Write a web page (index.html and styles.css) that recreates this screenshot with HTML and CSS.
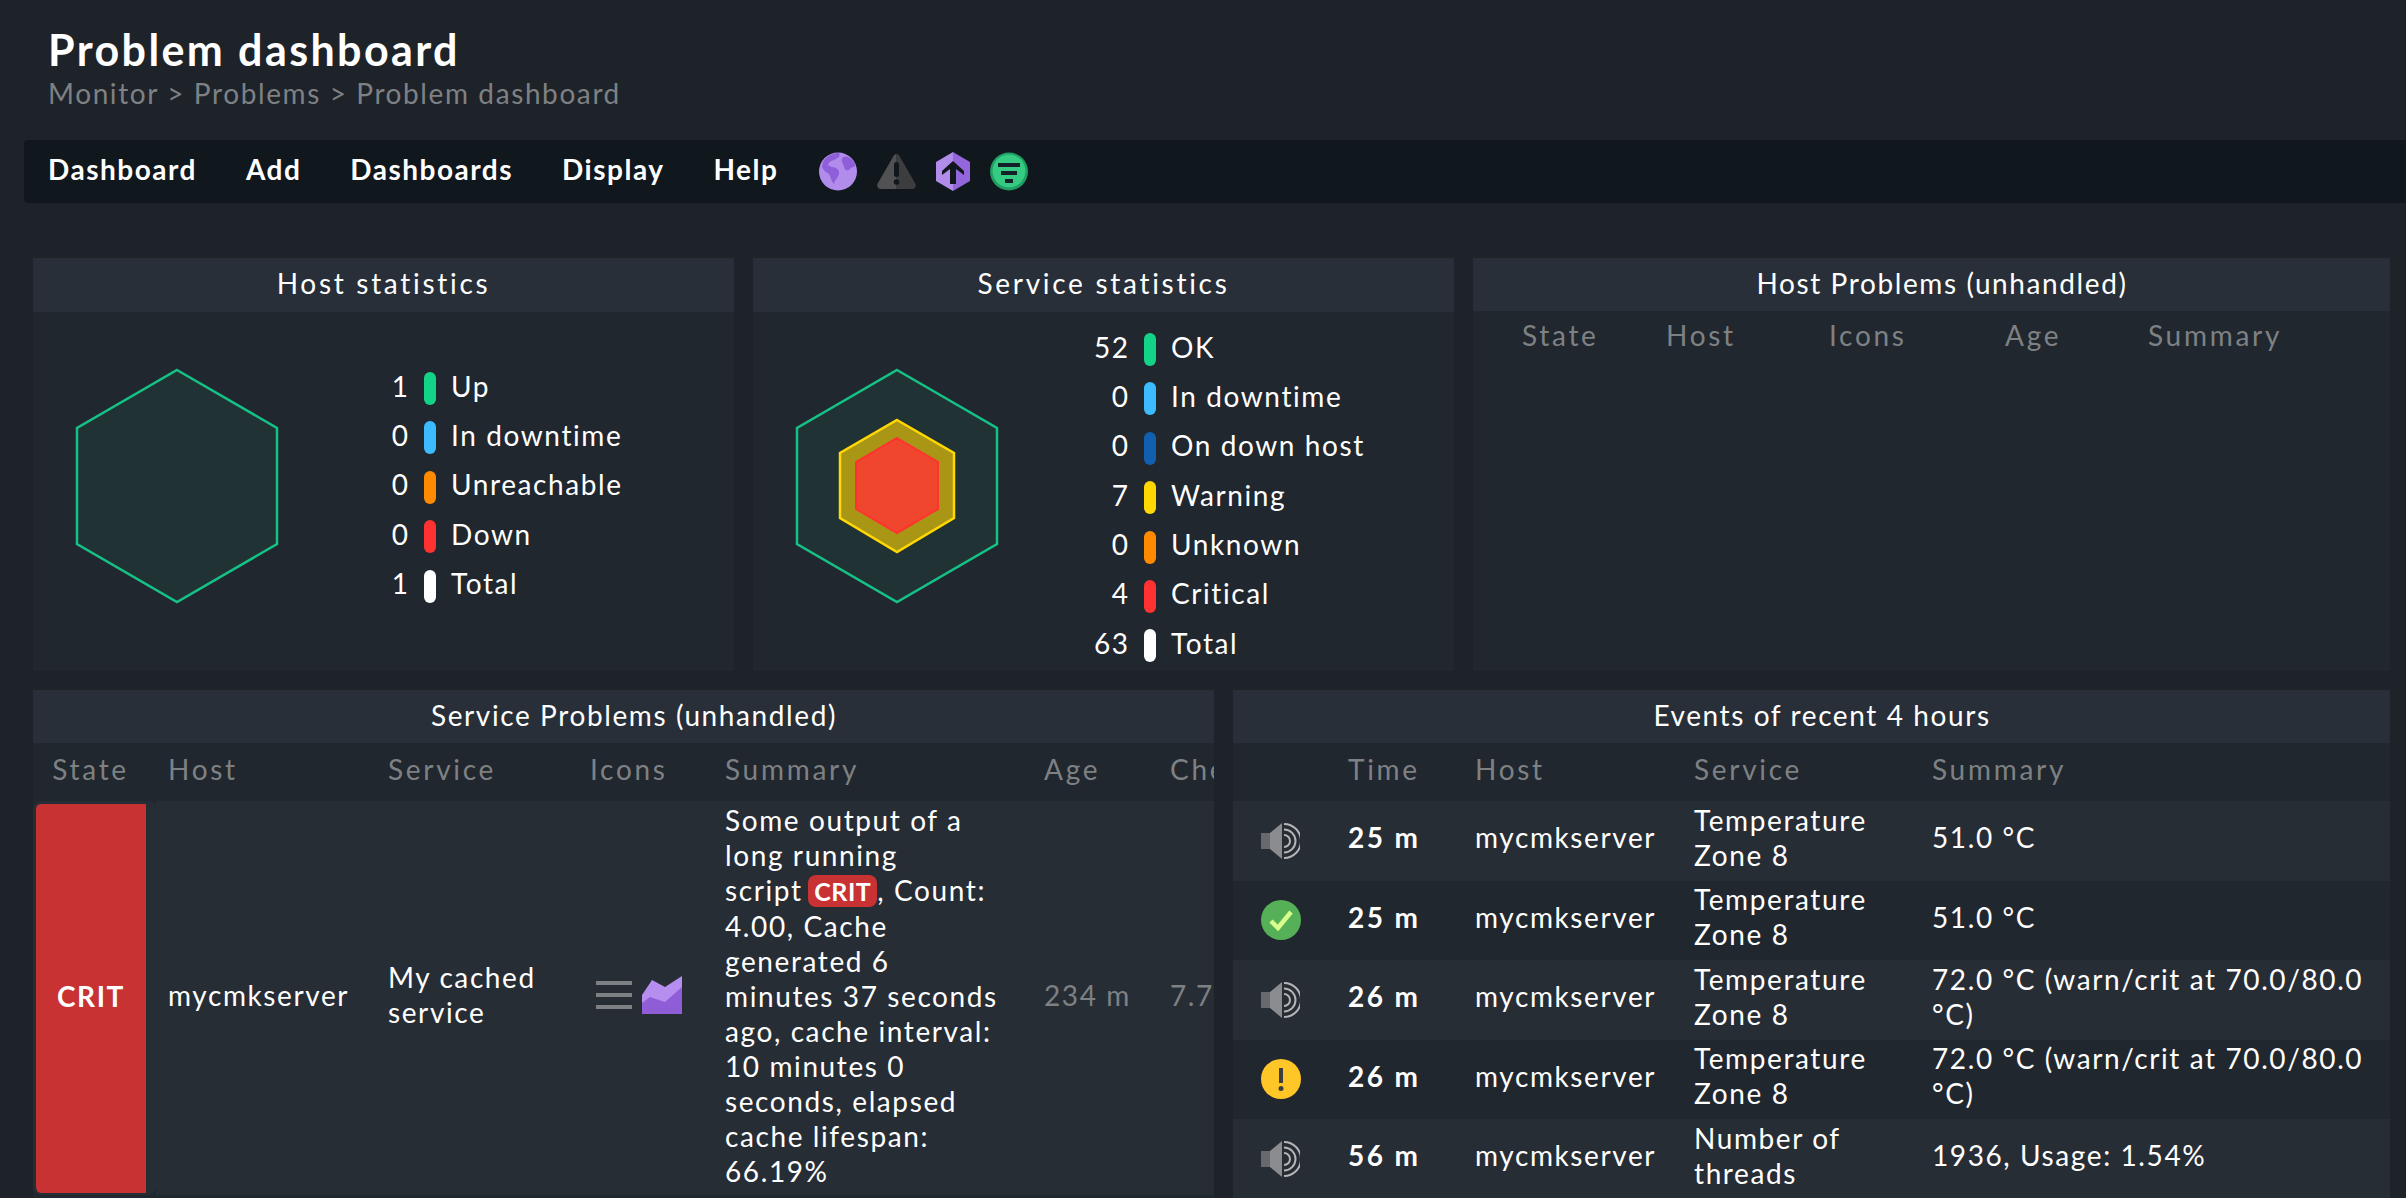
FILE: index.html
```html
<!DOCTYPE html>
<html lang="en">
<head>
  <meta charset="UTF-8">
  <title>Problem dashboard</title>
  <link rel="stylesheet" href="styles.css">
</head>
<body>
  <svg class="defs" width="0" height="0">
    <symbol id="speaker" viewBox="0 0 39 36">
      <rect x="0" y="10" width="10" height="16" fill="#666a6e"/>
      <path d="M9 10 L21 0 V36 L9 26 Z" fill="#8a8c8f"/>
      <path d="M23 1 A17 17 0 0 1 23 35 M23 6.500 A11.500 11.500 0 0 1 23 29.500 M23 12 A6 6 0 0 1 23 24" fill="none" stroke="#b4b5b7" stroke-width="2"/>
    </symbol>
  </svg>

  <header class="page-head">
    <h1>Problem dashboard</h1>
    <div class="breadcrumb">Monitor &gt; Problems &gt; Problem dashboard</div>
  </header>

  <nav class="menubar">
    <a>Dashboard</a>
    <a>Add</a>
    <a>Dashboards</a>
    <a>Display</a>
    <a>Help</a>
    <div class="menu-icons">
      <svg width="38" height="39" viewBox="0 0 38 39">
        <circle cx="19" cy="19.500" r="19" fill="#b18cea"/>
        <path d="M4 10 C8 3 15 1 20 1 C22 4 19 6 17 7 C14 9 12 8 10 11 C8 13 10 14 13 15 C17 15 21 18 20 22 C19 26 16 27 15 32 C12 29 12 25 10 22 C7 20 4 18 3 15 Z" fill="#8e5fd8"/>
        <path d="M24 5 C28 3 33 6 36 12 C37 16 33 14 31 17 C28 20 25 18 25 14 C24 11 21 9 24 5 Z" fill="#8e5fd8"/>
      </svg>
      <svg width="39" height="35" viewBox="0 0 39 35">
        <path d="M19.500 0 C21 0 22 1 23 3 L38 29 C40 32 38 35 35 35 H19.500 Z" fill="#3d3d3f"/>
        <path d="M19.500 0 C18 0 17 1 16 3 L1 29 C-1 32 1 35 4 35 H19.500 Z" fill="#515153"/>
        <rect x="17" y="8" width="5" height="15" rx="2.500" fill="#10171d"/>
        <circle cx="19.500" cy="28" r="2.800" fill="#10171d"/>
      </svg>
      <svg width="34" height="39" viewBox="0 0 34 39">
        <path d="M17 0 L0 10 V29 L17 39 Z" fill="#b18cea"/>
        <path d="M17 0 L34 10 V29 L17 39 Z" fill="#9366dc"/>
        <path d="M17 9 L28 19 V23 L20 17 V32 H14 V17 L6 23 V19 Z" fill="#10171d"/>
      </svg>
      <svg width="38" height="39" viewBox="0 0 38 39">
        <circle cx="19" cy="19.500" r="19" fill="#1f9d63"/>
        <circle cx="19" cy="19" r="16.500" fill="#35cb82"/>
        <rect x="8" y="11" width="22" height="4" fill="#14202a"/>
        <rect x="11" y="19" width="16" height="4" fill="#14202a"/>
        <rect x="15" y="27" width="8" height="4" fill="#14202a"/>
      </svg>
    </div>
  </nav>

  <main class="dash">
    <div class="row row-top">
      <section class="panel">
        <h2 class="wide">Host statistics</h2>
        <div class="stats">
          <svg class="hexes" width="288" height="359" viewBox="0 0 288 359">
            <polygon class="hex-ok" points="144,58 244,116 244,232 144,290 44,232 44,116"/>
          </svg>
          <div class="legend legend-host">
            <span class="num">1</span><i class="pill ok"></i><span>Up</span>
            <span class="num">0</span><i class="pill down-time"></i><span>In downtime</span>
            <span class="num">0</span><i class="pill unknown"></i><span>Unreachable</span>
            <span class="num">0</span><i class="pill crit"></i><span>Down</span>
            <span class="num">1</span><i class="pill total"></i><span>Total</span>
          </div>
        </div>
      </section>

      <section class="panel">
        <h2 class="wide">Service statistics</h2>
        <div class="stats">
          <svg class="hexes" width="288" height="359" viewBox="0 0 288 359">
            <polygon class="hex-ok" points="144,58 244,116 244,232 144,290 44,232 44,116"/>
            <polygon class="hex-warn" points="144,108 201,141 201,206 144,240 87,206 87,141"/>
            <polygon class="hex-crit" points="144,126 185,150 185,197 144,221 103,197 103,150"/>
          </svg>
          <div class="legend legend-service">
            <span class="num">52</span><i class="pill ok"></i><span>OK</span>
            <span class="num">0</span><i class="pill down-time"></i><span>In downtime</span>
            <span class="num">0</span><i class="pill on-down"></i><span>On down host</span>
            <span class="num">7</span><i class="pill warn"></i><span>Warning</span>
            <span class="num">0</span><i class="pill unknown"></i><span>Unknown</span>
            <span class="num">4</span><i class="pill crit"></i><span>Critical</span>
            <span class="num">63</span><i class="pill total"></i><span>Total</span>
          </div>
        </div>
      </section>

      <section class="panel">
        <h2>Host Problems (unhandled)</h2>
        <table class="grid host-problems">
          <colgroup><col class="c1"><col class="c2"><col class="c3"><col class="c4"><col class="c5"></colgroup>
          <thead>
            <tr><th>State</th><th>Host</th><th>Icons</th><th>Age</th><th>Summary</th></tr>
          </thead>
        </table>
      </section>
    </div>

    <div class="row row-bottom">
      <section class="panel">
        <h2>Service Problems (unhandled)</h2>
        <table class="grid service-problems">
          <colgroup><col class="c1"><col class="c2"><col class="c3"><col class="c4"><col class="c5"><col class="c6"><col class="c7"></colgroup>
          <thead>
            <tr><th class="state-head">State</th><th>Host</th><th>Service</th><th>Icons</th><th>Summary</th><th>Age</th><th>Checked</th></tr>
          </thead>
          <tbody>
            <tr class="light">
              <td class="state-crit">CRIT</td>
              <td>mycmkserver</td>
              <td>My cached service</td>
              <td class="icons-cell">
                <div class="row-icons">
                  <span class="menu-lines"><i></i><i></i><i></i></span>
                  <svg width="40" height="38" viewBox="0 0 40 38">
                    <path d="M0 19 L10 4 L23 11 L40 0 V38 H0 Z" fill="#b68ef0"/>
                    <path d="M0 27 L8 21 L23 26 L40 11 V38 H0 Z" fill="#8f5dd6"/>
                  </svg>
                </div>
              </td>
              <td class="summary">Some output of a long running script&nbsp;<span class="badge">CRIT</span>, Count: 4.00, Cache generated 6 minutes 37 seconds ago, cache interval: 10 minutes 0 seconds, elapsed cache lifespan: 66.19%</td>
              <td class="muted">234 m</td>
              <td class="muted">7.73 s</td>
            </tr>
          </tbody>
        </table>
      </section>

      <section class="panel">
        <h2>Events of recent 4 hours</h2>
        <table class="grid events">
          <colgroup><col class="c1"><col class="c2"><col class="c3"><col class="c4"><col class="c5"></colgroup>
          <thead>
            <tr><th></th><th>Time</th><th>Host</th><th>Service</th><th>Summary</th></tr>
          </thead>
          <tbody>
            <tr class="light">
              <td class="ev-icon"><svg width="39" height="36"><use href="#speaker"/></svg></td>
              <td class="time">25 m</td><td>mycmkserver</td><td>Temperature Zone 8</td><td>51.0 °C</td>
            </tr>
            <tr>
              <td class="ev-icon">
                <svg width="40" height="40" viewBox="0 0 40 40">
                  <circle cx="20" cy="20" r="20" fill="#55b058"/>
                  <path d="M10 21 L17 28 L30 12" fill="none" stroke="#d8ff8c" stroke-width="4.500"/>
                </svg>
              </td>
              <td class="time">25 m</td><td>mycmkserver</td><td>Temperature Zone 8</td><td>51.0 °C</td>
            </tr>
            <tr class="light">
              <td class="ev-icon"><svg width="39" height="36"><use href="#speaker"/></svg></td>
              <td class="time">26 m</td><td>mycmkserver</td><td>Temperature Zone 8</td><td>72.0 °C (warn/crit at 70.0/80.0 °C)</td>
            </tr>
            <tr>
              <td class="ev-icon">
                <svg width="40" height="40" viewBox="0 0 40 40">
                  <circle cx="20" cy="20" r="20" fill="#ffc628"/>
                  <rect x="18" y="9" width="4" height="15" fill="#3b3d42"/>
                  <circle cx="20" cy="29.500" r="2.500" fill="#3b3d42"/>
                </svg>
              </td>
              <td class="time">26 m</td><td>mycmkserver</td><td>Temperature Zone 8</td><td>72.0 °C (warn/crit at 70.0/80.0 °C)</td>
            </tr>
            <tr class="light">
              <td class="ev-icon"><svg width="39" height="36"><use href="#speaker"/></svg></td>
              <td class="time">56 m</td><td>mycmkserver</td><td>Number of threads</td><td>1936, Usage: 1.54%</td>
            </tr>
          </tbody>
        </table>
      </section>
    </div>
  </main>
</body>
</html>
```

FILE: styles.css
```css
html, body {
  margin: 0;
  height: 1198px;
  overflow: hidden;
}

body {
  background: #1e232a;
  color: #fff;
  font-family: Lato, "Open Sans", sans-serif;
  font-size: 28px;
  line-height: 35px;
  letter-spacing: 1.6px;
}

.defs {
  position: absolute;
}

.page-head {
  padding: 25px 0 0 48px;
}

h1 {
  margin: 0;
  font-size: 43px;
  line-height: 50px;
  font-weight: 700;
  letter-spacing: 2.400px;
}

.breadcrumb {
  margin-top: 1px;
  color: #7e8184;
}

.menubar {
  display: flex;
  align-items: center;
  gap: 49px;
  height: 63px;
  margin: 29px 0 0 24px;
  padding: 0 0 0 24px;
  background: #10171d;
  border-radius: 4px 0 0 4px;
  font-weight: 700;
  letter-spacing: 1.5px;
}

.menubar a {
  margin-top: -4px;
}

.menu-icons {
  display: flex;
  align-items: center;
  gap: 20px;
  margin-left: -8px;
}

.dash {
  padding: 55px 16px 0 33px;
}

.row {
  display: grid;
  column-gap: 19px;
}

.row-top {
  grid-template-columns: 701px 701px 917px;
  height: 413px;
  margin-bottom: 19px;
}

.row-bottom {
  grid-template-columns: 1181px 1157px;
}

.panel {
  background: #21272e;
  overflow: hidden;
}

.panel h2 {
  margin: 0;
  height: 53px;
  padding-left: 21px;
  background: #282f38;
  font-size: 28px;
  line-height: 50px;
  font-weight: 400;
  text-align: center;
}

.panel h2.wide {
  height: 54px;
  padding-left: 0;
  letter-spacing: 2.700px;
}

.stats {
  display: flex;
}

.hexes {
  flex: none;
}

.hex-ok {
  fill: #213234;
  stroke: #15c286;
  stroke-width: 2.500;
}

.hex-warn {
  fill: #a89614;
  stroke: #ffd703;
  stroke-width: 2.500;
}

.hex-crit {
  fill: #f0462d;
  stroke: #ff3232;
  stroke-width: 2;
}

.legend {
  display: grid;
  grid-template-columns: 87px 12px auto;
  grid-auto-rows: 33px;
  column-gap: 16px;
  row-gap: 16.400px;
  align-items: center;
  align-content: start;
}

.legend span {
  margin: 0 0 5px -1px;
}

.legend-host {
  padding-top: 60px;
}

.legend-service {
  padding-top: 21px;
}

.legend .num {
  margin: 0 -1.600px 5px 0;
  text-align: right;
}

.pill {
  height: 33px;
  border-radius: 6px;
}

.ok { background: #13d389; }
.down-time { background: #3cbcff; }
.on-down { background: #1160b0; }
.warn { background: #ffd703; }
.unknown { background: #ff8a00; }
.crit { background: #ff3232; }
.total { background: #fff; }

.grid {
  table-layout: fixed;
  border-collapse: separate;
  border-spacing: 0;
}

.grid th {
  height: 58px;
  padding: 0 12px 6px;
  box-sizing: border-box;
  color: #7e8184;
  font-weight: 400;
  text-align: left;
  letter-spacing: 2.700px;
}

.grid td {
  padding: 1px 12px 7px;
  vertical-align: middle;
}

.light {
  background: #272d35;
}

.host-problems { width: 917px; }
.host-problems th { height: 52px; padding-bottom: 4px; }
.host-problems .c1 { width: 181px; }
.host-problems .c2 { width: 163px; }
.host-problems .c3 { width: 176px; }
.host-problems .c4 { width: 143px; }
.host-problems .c5 { width: 254px; }
.host-problems th:first-child { padding-left: 49px; }

.service-problems { width: 1281px; }
.service-problems .c1 { width: 123px; }
.service-problems .c2 { width: 220px; }
.service-problems .c3 { width: 202px; }
.service-problems .c4 { width: 135px; }
.service-problems .c5 { width: 319px; }
.service-problems .c6 { width: 126px; }
.service-problems .c7 { width: 156px; }

.service-problems th.state-head {
  padding: 0 12px 6px 4px;
  text-align: center;
}

.grid td.state-crit {
  padding: 0 0 4px;
  border: solid transparent;
  border-width: 3px 10px 2px 3px;
  border-radius: 8px;
  background: #c83232;
  background-clip: padding-box;
  font-weight: 700;
  text-align: center;
}

.grid td.summary {
  padding: 2px 28px 6px 12px;
}

.row-icons {
  display: flex;
  align-items: center;
  gap: 10px;
  margin-left: 6px;
}

.menu-lines {
  display: flex;
  flex-direction: column;
  gap: 8px;
}

.menu-lines i {
  display: block;
  width: 36px;
  height: 4px;
  background: #7e8184;
}

.badge {
  margin-left: -3px;
  padding: 1px 6px;
  border-radius: 8px;
  background: #c83232;
  font-size: 25px;
  font-weight: 700;
  letter-spacing: 0.500px;
}

.muted {
  color: #7e8184;
  white-space: nowrap;
}

.events { width: 1157px; }
.events .c1 { width: 103px; }
.events .c2 { width: 127px; }
.events .c3 { width: 219px; }
.events .c4 { width: 238px; }
.events .c5 { width: 470px; }

.events tbody tr {
  height: 79.500px;
}

.grid td.ev-icon {
  padding: 0 0 0 28px;
  line-height: 0;
}

.grid td.time {
  font-weight: 700;
  letter-spacing: 2.400px;
}
```
